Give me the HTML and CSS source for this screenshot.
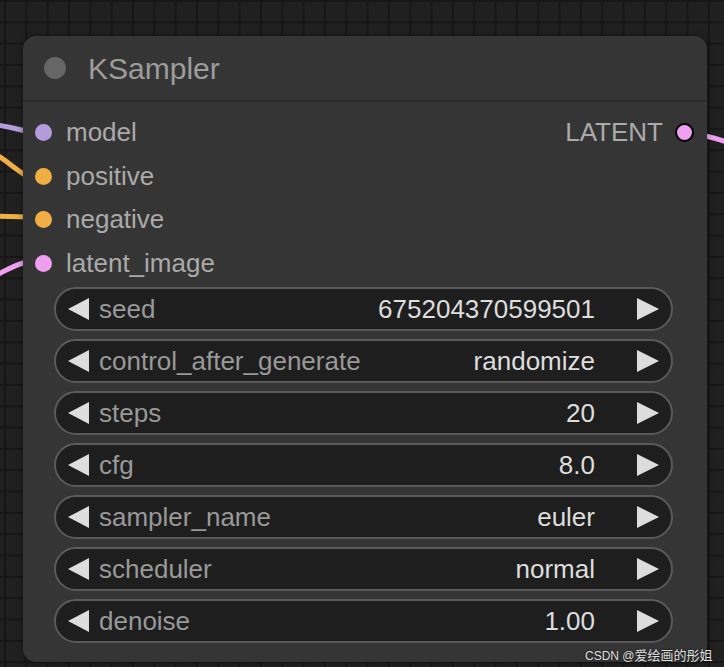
FILE: index.html
```html
<!DOCTYPE html>
<html lang="en">
<head>
  <meta charset="UTF-8">
  <title>KSampler</title>
  <link rel="stylesheet" href="styles.css">
</head>
<body>
  <!-- liens entre les noeuds -->
  <svg class="wires" width="724" height="667" viewBox="0 0 724 667">
    <path d="M-5 125 C8 126 16 129 30 132" stroke="#b39cdc"></path>
    <path d="M-5 154 C6 160 16 170 30 178" stroke="#efaf45"></path>
    <path d="M-5 216 L30 217" stroke="#efaf45"></path>
    <path d="M-5 276 C6 270 16 264 30 261" stroke="#ee9ff0"></path>
    <path d="M690 133 C705 135 715 138 730 143" stroke="#ee9ff0"></path>
  </svg>

  <div class="node">
    <div class="node-title">
      <span class="title-dot"></span>
      <span class="title-text">KSampler</span>
    </div>

    <div class="node-body">
      <div class="slot-row">
        <div class="slot"><span class="dot model"></span>model</div>
        <div class="slot output">LATENT<span class="dot latent out"></span></div>
      </div>
      <div class="slot-row">
        <div class="slot"><span class="dot cond"></span>positive</div>
      </div>
      <div class="slot-row">
        <div class="slot"><span class="dot cond"></span>negative</div>
      </div>
      <div class="slot-row">
        <div class="slot"><span class="dot latent"></span>latent_image</div>
      </div>

      <div class="widgets">
        <div class="widget">
          <svg class="arrow" width="22" height="22" viewBox="0 0 22 22"><polygon points="21,0 21,22 0,11"></polygon></svg>
          <span class="w-label">seed</span>
          <span class="w-value">675204370599501</span>
          <svg class="arrow" width="22" height="22" viewBox="0 0 22 22"><polygon points="0,0 0,22 22,11"></polygon></svg>
        </div>
        <div class="widget">
          <svg class="arrow" width="22" height="22" viewBox="0 0 22 22"><polygon points="21,0 21,22 0,11"></polygon></svg>
          <span class="w-label">control_after_generate</span>
          <span class="w-value">randomize</span>
          <svg class="arrow" width="22" height="22" viewBox="0 0 22 22"><polygon points="0,0 0,22 22,11"></polygon></svg>
        </div>
        <div class="widget">
          <svg class="arrow" width="22" height="22" viewBox="0 0 22 22"><polygon points="21,0 21,22 0,11"></polygon></svg>
          <span class="w-label">steps</span>
          <span class="w-value">20</span>
          <svg class="arrow" width="22" height="22" viewBox="0 0 22 22"><polygon points="0,0 0,22 22,11"></polygon></svg>
        </div>
        <div class="widget">
          <svg class="arrow" width="22" height="22" viewBox="0 0 22 22"><polygon points="21,0 21,22 0,11"></polygon></svg>
          <span class="w-label">cfg</span>
          <span class="w-value">8.0</span>
          <svg class="arrow" width="22" height="22" viewBox="0 0 22 22"><polygon points="0,0 0,22 22,11"></polygon></svg>
        </div>
        <div class="widget">
          <svg class="arrow" width="22" height="22" viewBox="0 0 22 22"><polygon points="21,0 21,22 0,11"></polygon></svg>
          <span class="w-label">sampler_name</span>
          <span class="w-value">euler</span>
          <svg class="arrow" width="22" height="22" viewBox="0 0 22 22"><polygon points="0,0 0,22 22,11"></polygon></svg>
        </div>
        <div class="widget">
          <svg class="arrow" width="22" height="22" viewBox="0 0 22 22"><polygon points="21,0 21,22 0,11"></polygon></svg>
          <span class="w-label">scheduler</span>
          <span class="w-value">normal</span>
          <svg class="arrow" width="22" height="22" viewBox="0 0 22 22"><polygon points="0,0 0,22 22,11"></polygon></svg>
        </div>
        <div class="widget">
          <svg class="arrow" width="22" height="22" viewBox="0 0 22 22"><polygon points="21,0 21,22 0,11"></polygon></svg>
          <span class="w-label">denoise</span>
          <span class="w-value">1.00</span>
          <svg class="arrow" width="22" height="22" viewBox="0 0 22 22"><polygon points="0,0 0,22 22,11"></polygon></svg>
        </div>
      </div>
    </div>
  </div>

  <div class="watermark"><span class="wm-latin">CSDN @</span>爱绘画的彤姐</div>
</body>
</html>
```

FILE: styles.css
```css
/* Général */
* {
  margin: 0;
  padding: 0;
  box-sizing: border-box;
}

html, body {
  width: 724px;
  height: 667px;
  overflow: hidden;
}

body {
  font-family: 'Liberation Sans', Arial, sans-serif;
  background-color: #202020;
  background-image:
    linear-gradient(to right, #161616 2px, transparent 2px),
    linear-gradient(to bottom, #161616 2px, transparent 2px);
  background-size: 21.33px 21.33px;
  background-position: 4px 0;
  padding: 36px 0 0 23px;
  position: relative;
}

/* Liens */
.wires {
  position: absolute;
  top: 0;
  left: 0;
}

.wires path {
  fill: none;
  stroke-width: 5;
  stroke-linecap: round;
}

/* Noeud */
.node {
  position: relative;
  width: 684px;
  height: 626px;
  background-color: #353535;
  border-radius: 13px;
  box-shadow: 0 0 6px rgba(0, 0, 0, 0.4);
}

.node-title {
  height: 66px;
  display: flex;
  align-items: center;
  padding-left: 21px;
  border-bottom: 2px solid #2a2a2a;
}

.title-dot {
  width: 22px;
  height: 22px;
  border-radius: 50%;
  background-color: #666;
  margin-right: 22px;
}

.title-text {
  font-size: 30px;
  color: #9c9c9c;
  margin-top: 2px;
}

.node-body {
  padding: 9px 0 0 0;
}

.slot-row {
  height: 43.5px;
  display: flex;
  justify-content: space-between;
  align-items: center;
  padding: 0 13px 0 12px;
}

.slot {
  display: flex;
  align-items: center;
  font-size: 26px;
  color: #aaa;
}

.dot {
  width: 17px;
  height: 17px;
  border-radius: 50%;
  margin-right: 14px;
}

.dot.out {
  width: 19px;
  height: 19px;
  margin-right: 0;
  margin-left: 12px;
  border: 2px solid #000;
}

.model { background-color: #b39cdc; }
.cond { background-color: #efaf45; }
.latent { background-color: #ee9ff0; }

/* Widgets */
.widgets {
  display: flex;
  flex-direction: column;
  gap: 8px;
  padding: 2px 34px 0 31px;
}

.widget {
  height: 44px;
  display: flex;
  align-items: center;
  background-color: #1e1e1e;
  border: 2px solid #5a5a5a;
  border-radius: 22px;
  padding: 0 12px 0 12px;
  font-size: 26px;
}

.arrow {
  fill: #ddd;
  flex-shrink: 0;
}

.w-label {
  color: #999;
  margin-left: 9px;
  flex: 1;
}

.w-value {
  color: #ddd;
  margin-right: 42px;
}

.watermark {
  position: absolute;
  left: 585px;
  top: 645px;
  white-space: nowrap;
  font-family: 'Liberation Sans', 'Noto Sans CJK SC', sans-serif;
  font-size: 13px;
  color: #e0e0e0;
  text-shadow: 0 0 2px #000;
}

.wm-latin {
  font-size: 12px;
}
```
